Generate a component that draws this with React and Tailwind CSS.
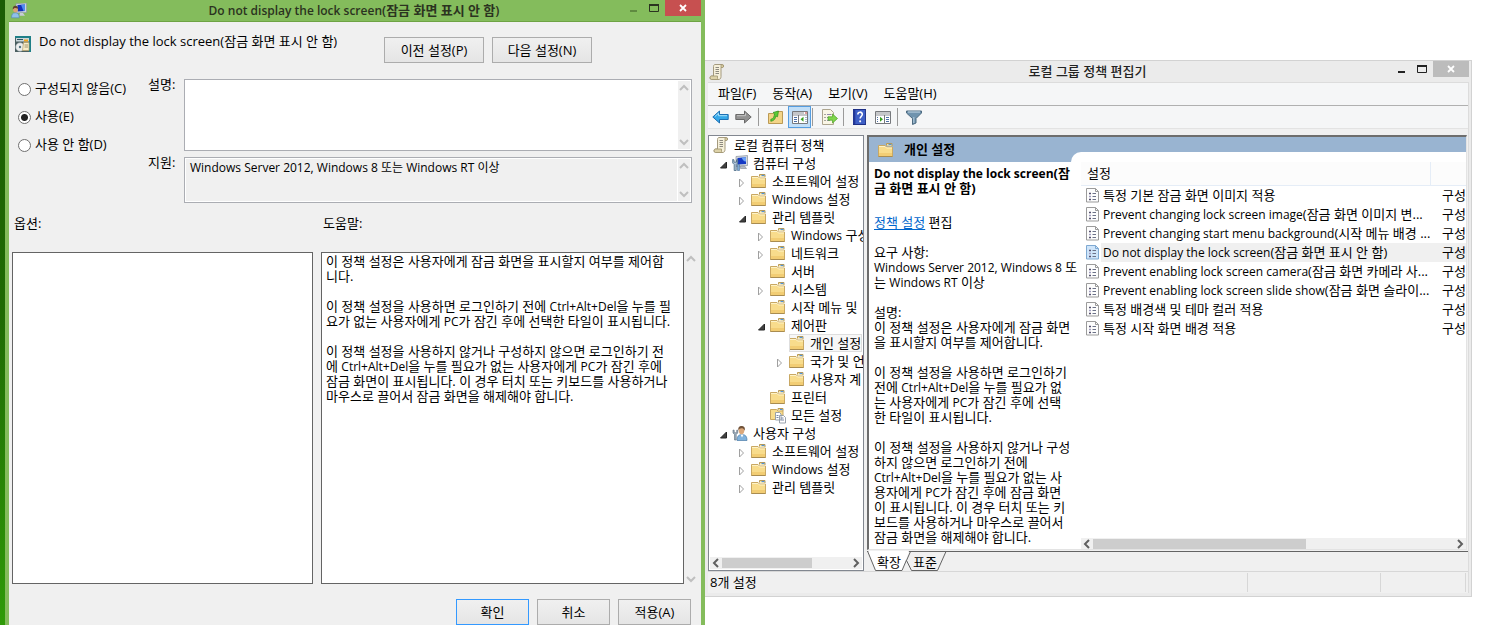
import React from "react";

/* ---------- text ---------- */

// Latin runs are set one pixel smaller than the Hangul around them.
function Mixed({ children }) {
  return children.split(/([A-Za-z][A-Za-z0-9+, ]*[A-Za-z0-9])/).map((part, i) =>
    i % 2 ? (
      <span key={i} className="text-[12px]">
        {part}
      </span>
    ) : (
      part
    )
  );
}

/* ---------- icons ---------- */

const Folder = () => (
  <svg className="size-4 shrink-0" viewBox="0 0 16 16">
    <path d="M8.500 3.500V1.500h5.500V4" fill="#f7e3a0" stroke="#b99a55" />
    <path d="M10.500 2.500h3" stroke="#4f93dd" strokeWidth="1.200" />
    <path d="M.5 14.500V3.500h6.500l1.500 1.500h6v9.500z" fill="#f8dc8c" stroke="#c9a863" />
    <path d="M1 4.500h6L8.500 6H14" fill="none" stroke="#fdf3c8" />
    <path d="M1 11h13v3H1z" fill="#f2cd74" />
    <path d="M.5 14.500h14" stroke="#a98c50" />
  </svg>
);

const Scroll = () => (
  <svg className="size-4 shrink-0" viewBox="0 0 16 16">
    <path d="M4.500 2.500C4.500 1.500 5 .5 6 .5h7.500c1.500 0 1.500 3 0 3H12v9c0 2-1 3-2.500 3H2.500c-2 0-2-3.500 0-3.500h2z" fill="#f6f0da" stroke="#a49a7e" />
    <path d="M12 3.500V1.500c0-1.300 2.500-1 2.500.5s-1 1.500-2.500 1.500zM2.500 12h6v2c0 .8.500 1.500 1 1.500h-7c-1.800 0-1.800-3.500 0-3.500z" fill="#ddd2a8" stroke="#a0946f" strokeWidth=".8" />
    <path d="M6.500 3.500H10M6.500 5.500H10M6.500 7.500H10M6.500 9.500H10" stroke="#8d8a80" />
  </svg>
);

const Computer = () => (
  <svg className="size-4 shrink-0" viewBox="0 0 16 16">
    <path d="M4 1.500l11.500-1v10L4 11.500z" fill="#d3d8df" stroke="#8a919c" strokeWidth=".7" />
    <path d="M5.500 3l8.500-.8v6.800l-8.500.6z" fill="#1639c4" />
    <path d="M9.500 2.600l4.500-.4v4.300c-2 .2-3-1-4.500-3.900z" fill="#6ea3f6" />
    <path d="M8.500 11h4l2 2.500h-6z" fill="#b6bcc5" stroke="#858b95" strokeWidth=".6" />
    <path d="M.7 4.500v3.500l1.500 1.500v6h2V9.500L5.700 8V4.500l-1.200.3v2.400H2V4.800z" fill="#b5c9dc" stroke="#44647f" strokeWidth=".8" />
    <path d="M5.500 9.500h2v6h-2z" fill="#7da9d3" stroke="#4a6e94" strokeWidth=".6" />
  </svg>
);

const Person = () => (
  <svg className="size-4 shrink-0" viewBox="0 0 16 16">
    <path d="M5 15.500c0-4 1.500-6 5-6s5 2 5 6z" fill="#7fb2de" stroke="#4c7ca8" strokeWidth=".7" />
    <path d="M8.500 9.500l1.500 3 1.500-3z" fill="#fff" />
    <ellipse cx="9.500" cy="5.500" rx="2.800" ry="3.700" fill="#dba87b" />
    <path d="M6.300 5.500C6 2 7.500 1 9.500 1s4 1 3.300 4.700c-.9-2-2-2.400-3.300-2.400s-2.700.7-3.200 2.200z" fill="#6f5138" />
    <path d="M1 5v3l1.500 1.500v5.500h1.700V9.500l1.500-1.500v-3l-1 .2v2.500h-2.500V5.200z" fill="#9fb0bf" stroke="#5a6c7c" strokeWidth=".6" />
  </svg>
);

const UserComputer = () => (
  <svg className="size-4 shrink-0" viewBox="0 0 16 16">
    <path d="M5 .7L15.500 0v9.500L5 10z" fill="#ccd4de" stroke="#8791a0" strokeWidth=".6" />
    <path d="M6.500 2l7.500-.6v6.600l-7.500.5z" fill="#1530ba" />
    <path d="M10 1.700l4-.3v6.600l-1.500.1z" fill="#4e8cf0" />
    <path d="M9 10h3l2 2.700H8.500z" fill="#c7cdd6" />
    <path d="M.5 14.800c0-3.300 1-5 3.800-5s3.900 1.700 3.900 5z" fill="#8fc0ea" stroke="#5285b5" strokeWidth=".6" />
    <ellipse cx="4.500" cy="6.500" rx="2.400" ry="3" fill="#dba273" />
    <path d="M1.800 6.500C1.600 3.500 3 2.800 4.500 2.800S7.300 3.700 7 5.800c-2-1.300-4-1.300-5.200.7z" fill="#5f432d" />
  </svg>
);

const PolicyBox = () => (
  <svg className="size-4 shrink-0" viewBox="0 0 16 16">
    <rect width="16" height="16" fill="#4b5f60" />
    <rect width="16" height="2" fill="#1f7f87" />
    <rect x="14" width="2" height="16" fill="#1f7f87" />
    <rect x="1" y="2" width="13" height="3.500" fill="#c9d6da" />
    <path d="M2 3.500h6" stroke="#2d5260" />
    <path d="M9 4.500h4" stroke="#f2a51c" strokeWidth="2" />
    <circle cx="5" cy="11" r="4.300" fill="#eceeee" stroke="#98a5a9" strokeWidth=".6" />
    <circle cx="5" cy="11" r="1.200" fill="#52757f" />
    <path d="M8.500 6.500h5.500v8H7.500z" fill="#f8edc8" stroke="#b5a06c" strokeWidth=".7" />
    <path d="M9.500 9h3.500M9.500 11h3.500" stroke="#8a7e5c" strokeWidth=".8" />
  </svg>
);

const AllSettings = () => (
  <svg className="size-4 shrink-0 overflow-visible" viewBox="0 0 16 16">
    <path d="M8 3V1.500h5V4" fill="#f7e3a0" stroke="#b99a55" />
    <path d="M10 2.500h2.500" stroke="#4f93dd" />
    <path d="M.5 12.500V2.500h6L8 4h5v8.500z" fill="#f8dc8c" stroke="#c9a863" />
    <path d="M5.500 5.500h4l1.500 1.500v6h-5.500zM9.500 8.500h4l2 2v5.500h-6z" fill="#fff" stroke="#8f98a5" strokeWidth=".9" />
    <path d="M6.500 8.500h2M6.500 10.500h2M11 11h2.500M11 13h3" stroke="#6b7a9c" strokeWidth=".9" />
  </svg>
);

const Setting = ({ selected }) => (
  <svg className="h-4 w-[13px] shrink-0" viewBox="0 0 13 16">
    <path d="M.5 1.500h9l3 3v10.500H.5z" fill={selected ? "#cfe5fa" : "#fdfdfd"} stroke={selected ? "#7fa9d2" : "#9b9b9b"} />
    <path d="M9.500 1.500v3h3" fill="none" stroke={selected ? "#7fa9d2" : "#9b9b9b"} />
    <path d="M3 6.500h2M3 12.500h2" stroke="#55506e" strokeWidth="1.500" />
    <path d="M3 9.500h2" stroke="#a09cc0" strokeWidth="1.500" />
    <path d="M6.500 6.500H10M6.500 9.500H10M6.500 12.500H10" stroke="#6c7288" />
  </svg>
);

const Chevron = ({ dir, className = "text-[#606060]" }) => {
  const d = {
    up: "M1 6l4-4 4 4",
    down: "M1 2l4 4 4-4",
    left: "M6 1L2 5l4 4",
    right: "M2 1l4 4-4 4",
  }[dir];
  const tall = dir === "left" || dir === "right";
  return (
    <svg className={`${tall ? "h-[10px] w-2" : "h-2 w-[10px]"} shrink-0 ${className}`} viewBox={tall ? "0 0 8 10" : "0 0 10 8"}>
      <path d={d} fill="none" stroke="currentColor" strokeWidth="2" />
    </svg>
  );
};

const MinIcon = () => (
  <svg className="h-[10px] w-[10px]" viewBox="0 0 10 10">
    <path d="M1 8h7" stroke="currentColor" strokeWidth="2" />
  </svg>
);
const MaxIcon = () => (
  <svg className="h-[10px] w-[10px]" viewBox="0 0 10 10">
    <path d="M.5 1v7.500h9V1" fill="none" stroke="currentColor" />
    <path d="M0 2h10" stroke="currentColor" strokeWidth="2" />
  </svg>
);
const CloseIcon = () => (
  <svg className="h-2 w-2" viewBox="0 0 8 8">
    <path d="M1 1l6 6M7 1L1 7" stroke="#fff" strokeWidth="1.800" />
  </svg>
);

/* ---------- policy dialog ---------- */

const pushButton =
  "h-[26px] border bg-linear-to-b from-[#f0f0f0] to-[#e5e5e5] text-[13px] leading-[18px] whitespace-nowrap text-black";

function Bars({ className = "" }) {
  return (
    <div className={`flex w-3 shrink-0 flex-col items-center justify-between bg-[#f0f0f0] ${className}`}>
      <Chevron dir="up" className="text-[#bfbfbf]" />
      <Chevron dir="down" className="text-[#bfbfbf]" />
    </div>
  );
}

function Field({ id, label, value, className, inner, readOnly }) {
  return (
    <div className={`flex ${className}`}>
      <label htmlFor={id} className="-mt-1 w-9 shrink-0 text-[13px] leading-[18px]">
        {label}
      </label>
      <div className="flex min-w-0 grow border border-[#abadb3] bg-white p-px">
        <textarea
          id={id}
          defaultValue={value}
          readOnly={readOnly}
          className={`block min-w-0 grow resize-none overflow-hidden px-1 text-[12px] leading-[18px] outline-none ${inner}`}
        />
        <Bars className="ml-px py-[3px]" />
      </div>
    </div>
  );
}

const helpLines = [
  "이 정책 설정은 사용자에게 잠금 화면을 표시할지 여부를 제어합",
  "니다.",
  "",
  "이 정책 설정을 사용하면 로그인하기 전에 Ctrl+Alt+Del을 누를 필",
  "요가 없는 사용자에게 PC가 잠긴 후에 선택한 타일이 표시됩니다.",
  "",
  "이 정책 설정을 사용하지 않거나 구성하지 않으면 로그인하기 전",
  "에 Ctrl+Alt+Del을 누를 필요가 없는 사용자에게 PC가 잠긴 후에",
  "잠금 화면이 표시됩니다. 이 경우 터치 또는 키보드를 사용하거나",
  "마우스로 끌어서 잠금 화면을 해제해야 합니다.",
];

function Lines({ lines }) {
  return lines.map((line, i) => (
    <p key={i} className="h-[15px] whitespace-nowrap">
      <Mixed>{line}</Mixed>
    </p>
  ));
}

function Radio({ label, checked }) {
  return (
    <label className="flex h-[18px] items-center gap-1 whitespace-nowrap">
      <input
        type="radio"
        name="state"
        defaultChecked={checked}
        className="size-[13px] appearance-none rounded-full border border-[#707070] bg-white checked:bg-[radial-gradient(circle,#222_3px,#fff_4px)]"
      />
      {label}
    </label>
  );
}

function PolicyDialog() {
  return (
    <section className="flex min-h-screen min-w-0 bg-linear-to-b from-[#1c5c04] via-[#1f6a04] to-[#2f9a08] pl-[5px]">
      <div className="flex min-w-0 grow flex-col bg-[#84bc5c] pr-1 pl-1">
        <header className="flex h-[21px] items-start text-[#2b3320]">
          <div className="ml-[2px] flex h-[21px] w-[68px] items-center">
            <UserComputer />
          </div>
          <h1 className="grow text-center text-[13px] leading-[20px] font-semibold whitespace-nowrap">
            <Mixed>Do not display the lock screen(잠금 화면 표시 안 함)</Mixed>
          </h1>
          <button aria-label="최소화" className="mt-[3px] mr-[10px] text-[#5f8a40]">
            <MinIcon />
          </button>
          <button aria-label="최대화" className="mt-[3px] mr-[6px]">
            <MaxIcon />
          </button>
          <button aria-label="닫기" className="flex h-4 w-9 items-center justify-center bg-[#c75050]">
            <CloseIcon />
          </button>
        </header>

        <div className="flex grow flex-col border-t border-[#6ea344] bg-[#f0f0f0] text-[13px]">
          <div className="flex px-[6px] pt-[14px]">
            <div className="flex h-4 w-[369px] gap-2 whitespace-nowrap">
              <PolicyBox />
              <h2 className="-mt-1 leading-[18px]">Do not display the lock screen(잠금 화면 표시 안 함)</h2>
            </div>
            <div className="mt-px flex gap-2">
              <button className={`${pushButton} w-[100px] border-[#acacac]`}>이전 설정(P)</button>
              <button className={`${pushButton} w-[100px] border-[#acacac]`}>다음 설정(N)</button>
            </div>
          </div>

          <div className="flex pt-4 pr-[9px] pl-[9px]">
            <fieldset className="flex w-[130px] shrink-0 flex-col gap-[10px] pt-px">
              <Radio label="구성되지 않음(C)" />
              <Radio label="사용(E)" checked />
              <Radio label="사용 안 함(D)" />
            </fieldset>
            <div className="flex min-w-0 grow flex-col gap-[6px]">
              <Field id="comment" label="설명:" value="" className="h-[72px]" inner="bg-white" />
              <Field
                id="supported"
                label="지원:"
                value="Windows Server 2012, Windows 8 또는 Windows RT 이상"
                className="h-[46px]"
                inner="bg-[#f0f0f0]"
                readOnly
              />
            </div>
          </div>

          <div className="flex grow pt-[11px] pr-1 pl-[3px]">
            <div className="flex w-[301px] shrink-0 flex-col">
              <h3 className="h-[38px] pl-[2px] leading-[18px]">옵션:</h3>
              <div className="grow border border-[#646464] bg-white" />
            </div>
            <div className="ml-2 flex min-w-0 grow flex-col">
              <h3 className="h-[38px] pl-[2px] leading-[18px]">도움말:</h3>
              <div className="flex grow">
                <div className="min-w-0 grow overflow-hidden border border-[#646464] bg-white pt-px pl-1 leading-[15px]">
                  <Lines lines={helpLines} />
                </div>
                <Bars className="ml-px pt-[3px] pb-px" />
              </div>
            </div>
          </div>

          <footer className="flex justify-end gap-2 pt-[15px] pr-[10px]">
            <button className={`${pushButton} w-[73px] border-[#3399ff]`}>확인</button>
            <button className={`${pushButton} w-[73px] border-[#acacac]`}>취소</button>
            <button className={`${pushButton} w-[73px] border-[#acacac]`}>적용(A)</button>
          </footer>
        </div>
      </div>
    </section>
  );
}

/* ---------- group policy editor ---------- */

const tree = [
  { level: 0, icon: Scroll, label: "로컬 컴퓨터 정책" },
  { level: 1, icon: Computer, label: "컴퓨터 구성", open: true },
  { level: 2, icon: Folder, label: "소프트웨어 설정", open: false },
  { level: 2, icon: Folder, label: "Windows 설정", open: false },
  { level: 2, icon: Folder, label: "관리 템플릿", open: true },
  { level: 3, icon: Folder, label: "Windows 구성", open: false },
  { level: 3, icon: Folder, label: "네트워크", open: false },
  { level: 3, icon: Folder, label: "서버" },
  { level: 3, icon: Folder, label: "시스템", open: false },
  { level: 3, icon: Folder, label: "시작 메뉴 및" },
  { level: 3, icon: Folder, label: "제어판", open: true },
  { level: 4, icon: Folder, label: "개인 설정", selected: true },
  { level: 4, icon: Folder, label: "국가 및 언", open: false },
  { level: 4, icon: Folder, label: "사용자 계" },
  { level: 3, icon: Folder, label: "프린터" },
  { level: 3, icon: AllSettings, label: "모든 설정" },
  { level: 1, icon: Person, label: "사용자 구성", open: true },
  { level: 2, icon: Folder, label: "소프트웨어 설정", open: false },
  { level: 2, icon: Folder, label: "Windows 설정", open: false },
  { level: 2, icon: Folder, label: "관리 템플릿", open: false },
];

const indent = ["pl-[3px]", "pl-[9px]", "pl-7", "pl-[47px]", "pl-[66px]"];

function Twisty({ open }) {
  return (
    <svg className="mt-[3px] mr-1 h-[10px] w-[9px] shrink-0" viewBox="0 0 9 10">
      {open === true && <path d="M7.500 2v6h-6z" fill="#404040" stroke="#262626" />}
      {open === false && <path d="M1.500 1v8L5.500 5z" fill="#fff" stroke="#a0a0a0" />}
    </svg>
  );
}

function Tree() {
  return (
    <nav className="flex w-[156px] shrink-0 flex-col overflow-hidden border border-[#828790] bg-white px-px pb-px">
      <ul className="grow">
        {tree.map(({ level, icon: Icon, label, open, selected }, i) => (
          <li key={i} className={`flex h-[18px] items-center ${indent[level]}`}>
            {level > 0 && <Twisty open={open} />}
            <span
              className={`flex h-[18px] items-center gap-1 whitespace-nowrap ${
                selected ? "grow bg-[#f7f7f7] outline -outline-offset-1 outline-[#dedede]" : ""
              }`}
            >
              <Icon />
              <span className="pl-px leading-[18px]">
                <Mixed>{label}</Mixed>
              </span>
            </span>
          </li>
        ))}
      </ul>
      <div className="flex h-3 shrink-0 items-center bg-[#f0f0f0] px-[2px]">
        <Chevron dir="left" />
        <div className="flex h-[10px] grow px-[2px]">
          <div className="w-[70%] bg-[#cdcdcd]" />
        </div>
        <Chevron dir="right" />
      </div>
    </nav>
  );
}

const rows = [
  "특정 기본 잠금 화면 이미지 적용",
  "Prevent changing lock screen image(잠금 화면 이미지 변...",
  "Prevent changing start menu background(시작 메뉴 배경 ...",
  "Do not display the lock screen(잠금 화면 표시 안 함)",
  "Prevent enabling lock screen camera(잠금 화면 카메라 사...",
  "Prevent enabling lock screen slide show(잠금 화면 슬라이...",
  "특정 배경색 및 테마 컬러 적용",
  "특정 시작 화면 배경 적용",
];

const description = [
  "요구 사항:",
  "Windows Server 2012, Windows 8 또",
  "는 Windows RT 이상",
  "",
  "설명:",
  "이 정책 설정은 사용자에게 잠금 화면",
  "을 표시할지 여부를 제어합니다.",
  "",
  "이 정책 설정을 사용하면 로그인하기",
  "전에 Ctrl+Alt+Del을 누를 필요가 없",
  "는 사용자에게 PC가 잠긴 후에 선택",
  "한 타일이 표시됩니다.",
  "",
  "이 정책 설정을 사용하지 않거나 구성",
  "하지 않으면 로그인하기 전에",
  "Ctrl+Alt+Del을 누를 필요가 없는 사",
  "용자에게 PC가 잠긴 후에 잠금 화면",
  "이 표시됩니다. 이 경우 터치 또는 키",
  "보드를 사용하거나 마우스로 끌어서",
  "잠금 화면을 해제해야 합니다.",
];

const Separator = () => <div className="h-[18px] w-px bg-[#9a9a9a]" />;

function Toolbar() {
  const button = "flex h-[22px] w-[23px] items-center justify-center";
  return (
    <div className="flex h-[22px] items-center bg-[#f5f6f7] pl-px">
      <button aria-label="뒤로" className={button}>
        <svg className="h-4 w-[17px]" viewBox="0 0 17 16">
          <path d="M.8 8l6.700-6v3.500h8.700v5H7.500V14z" fill="#35a8e8" stroke="#1d6fb3" />
          <path d="M3 7.500l3.500-3.200v2.400h8.500" fill="none" stroke="#a7e0fa" />
        </svg>
      </button>
      <button aria-label="앞으로" className={button}>
        <svg className="h-4 w-[17px]" viewBox="0 0 17 16">
          <path d="M16.200 8L9.500 2v3.500H.8v5h8.700V14z" fill="#929292" stroke="#696969" />
          <path d="M2 6.700h8.500V4.300" fill="none" stroke="#c4c4c4" />
        </svg>
      </button>
      <div className="mr-[9px] ml-[3px]">
        <Separator />
      </div>
      <button aria-label="위로" className="mr-1 flex h-[22px] w-4 items-center justify-center">
        <svg className="size-4" viewBox="0 0 16 16">
          <path d="M.5 14.500v-10h5l1.500 1.500h2V2.500h5.500v12z" fill="#f3d488" stroke="#bb9a55" />
          <path d="M2.800 12.300c3.500-.5 4.700-2.800 5-5.300l1.700.8L10.500 2 5 3.500l1.500 1.200c-.3 3-1 5-3.700 5.600z" fill="#5ccb35" stroke="#2f8f1c" strokeWidth=".7" />
        </svg>
      </button>
      <button aria-label="콘솔 트리 표시" className="flex h-[22px] w-[23px] items-center justify-center border border-[#559de0] bg-[#c2dff8]">
        <svg className="h-[13px] w-4" viewBox="0 0 16 13">
          <path d="M.5.5h15v12H.5z" fill="#fff" stroke="#77797d" />
          <path d="M1 2h11M1 4h14" stroke="#8b8e94" />
          <path d="M13 2h2" stroke="#c23b3b" />
          <path d="M6.500 4v9" stroke="#77797d" />
          <path d="M2 6.500h3M2 8.500h3M2 10.500h3M13.500 6.500h1M13.500 8.500h1M13.500 10.500h1" stroke="#4d6fa5" />
          <path d="M11.500 5.800v5l-3-2.500z" fill="#38a020" />
        </svg>
      </button>
      <div className="mr-2 ml-px">
        <Separator />
      </div>
      <button aria-label="목록 내보내기" className="flex h-[22px] w-[17px] items-center justify-center">
        <svg className="h-4 w-[17px]" viewBox="0 0 17 16">
          <path d="M1.500.5h8l3 3v12h-11z" fill="#faf6e6" stroke="#ada58e" />
          <path d="M3.500 5.500h1M3.500 8.500h1M3.500 11.500h1" stroke="#555" />
          <path d="M6 5.500h4.500M6 8.500h3M6 11.500h3" stroke="#9088a8" />
          <path d="M7 7.800h4.500V5l5 4.500-5 4.500v-2.800H7z" fill="#7fd64c" stroke="#4ba022" strokeWidth=".7" />
        </svg>
      </button>
      <div className="mr-[9px] ml-[5px]">
        <Separator />
      </div>
      <button aria-label="도움말" className="flex h-[22px] w-[13px] items-center justify-center">
        <svg className="h-4 w-[13px]" viewBox="0 0 14 16" preserveAspectRatio="none">
          <rect x=".5" y=".5" width="13" height="15" fill="#3e5fc6" stroke="#1d2f86" />
          <path d="M1.500 1v14" stroke="#23389a" strokeWidth="2" />
          <path d="M5.200 5.500C5.200 2.500 10 2.500 10 5.300c0 2-2.300 2-2.300 4.200" fill="none" stroke="#fff" strokeWidth="1.700" />
          <circle cx="7.700" cy="12.300" r="1.100" fill="#fff" />
        </svg>
      </button>
      <button aria-label="작업 창 표시" className="ml-[9px] flex h-[22px] w-4 items-center justify-center">
        <svg className="h-[13px] w-4" viewBox="0 0 16 13">
          <path d="M.5.5h15v12H.5z" fill="#fff" stroke="#77797d" />
          <path d="M1 2h14M1 4h14" stroke="#8b8e94" />
          <path d="M9.500 4v9" stroke="#77797d" />
          <path d="M2 6.500h1M2 8.500h1M2 10.500h1M11 6.500h3M11 8.500h3M11 10.500h3" stroke="#4d6fa5" />
          <path d="M5 5.800v5l3-2.500z" fill="#38a020" />
        </svg>
      </button>
      <div className="mr-2 ml-[6px]">
        <Separator />
      </div>
      <button aria-label="필터" className="flex h-[22px] w-4 items-center justify-center">
        <svg className="h-[15px] w-4" viewBox="0 0 16 15">
          <path d="M.5 1h15v2L10 8.500v4.500l-3.500 1.500v-6L.5 3z" fill="#6f93ae" stroke="#4d6a80" />
          <path d="M2 2h12" stroke="#c7dae7" />
          <path d="M7.800 7v6" stroke="#b5cddd" />
        </svg>
      </button>
    </div>
  );
}

function SettingsTable() {
  return (
    <table className="w-full table-fixed border-collapse text-left">
      <thead>
        <tr className="h-[23px] border-b border-[#e5edf7] bg-[#fcfcfc]">
          <th className="border-r border-[#e5edf7] py-0 pl-[6px] font-normal">설정</th>
          <th className="w-9 p-0" aria-label="상태" />
        </tr>
      </thead>
      <tbody>
        {rows.map((label, i) => (
          <tr key={label} className="h-[19px]">
            <td className="overflow-hidden p-0 pl-[5px] leading-[19px] whitespace-nowrap">
              <div className="flex items-center gap-[2px]">
                <Setting selected={i === 3} />
                <span className={`grow pl-[2px] ${i === 3 ? "bg-[#f0f0f0]" : ""}`}>
                  <Mixed>{label}</Mixed>
                </span>
              </div>
            </td>
            <td className={`overflow-hidden p-0 pl-3 leading-[19px] whitespace-nowrap ${i === 3 ? "bg-[#f0f0f0]" : ""}`}>구성</td>
          </tr>
        ))}
      </tbody>
    </table>
  );
}

function Details() {
  return (
    <div className="ml-[3px] flex min-w-0 grow flex-col">
      <div className="mr-px flex border-t-2 border-r border-b border-l-2 border-t-[#6d6d6d] border-r-[#e3e3e3] border-b-[#e3e3e3] border-l-[#6d6d6d] bg-[#99b4d1]">
        <div className="z-10 flex w-[202px] shrink-0 flex-col">
          <div className="flex h-[25px] items-center gap-[10px] pl-[9px]">
            <Folder />
            <h2 className="font-bold">개인 설정</h2>
          </div>
          <div className="grow bg-white pt-1 pb-1 pl-[5px] leading-[15px]">
            <h3 className="h-[33px] font-bold whitespace-nowrap">
              <Mixed>Do not display the lock screen(잠</Mixed>
              <br />
              금 화면 표시 안 함)
            </h3>
            <p className="mt-4 mb-[15px]">
              <a href="#edit" className="text-[#0066cc] underline underline-offset-2">
                정책 설정
              </a>{" "}
              편집
            </p>
            <Lines lines={description} />
          </div>
        </div>
        <div className="flex min-w-0 grow flex-col pt-[15px]">
          <div className="flex grow flex-col rounded-tl-[10px] bg-white pt-[10px] pl-[10px]">
            <div className="grow">
              <SettingsTable />
            </div>
            <div className="flex h-[11px] items-center bg-[#f0f0f0] px-[2px]">
              <Chevron dir="left" />
              <div className="flex h-[10px] grow px-[2px]">
                <div className="w-[59%] bg-[#cdcdcd]" />
              </div>
              <Chevron dir="right" />
            </div>
          </div>
        </div>
      </div>
      <div className="relative mt-px flex h-5 border-t border-[#646464]">
        <svg className="absolute -top-px left-0 h-5 w-[82px]" viewBox="0 0 82 20">
          <path d="M1 0l8 19h26l4-10 3-9z" fill="#fff" />
          <path d="M.5 0l8 19.500h26.500L39.500 9M43.500.5H79L70.500 19.500H44.500L39.500 9.500L43.500.5" fill="none" stroke="#646464" />
        </svg>
        <button className="relative ml-[10px] text-[13px] leading-[18px]">확장</button>
        <button className="relative ml-3 text-[13px] leading-[18px]">표준</button>
      </div>
    </div>
  );
}

function PolicyEditor() {
  return (
    <section className="mt-[60px] min-w-0 self-start border border-l-0 border-[#d2d2d2] bg-[#ebebeb] pr-[2px] pb-[3px] pl-[3px] text-[13px]">
      <header className="flex h-[21px] items-start text-[#222]">
        <div className="mt-[3px] w-[70px] pl-px">
          <Scroll />
        </div>
        <h1 className="grow text-center leading-[20px] font-medium">로컬 그룹 정책 편집기</h1>
        <button aria-label="최소화" className="mt-[3px] mr-[10px]">
          <MinIcon />
        </button>
        <button aria-label="최대화" className="mt-[3px] mr-[6px]">
          <MaxIcon />
        </button>
        <button aria-label="닫기" className="flex h-4 w-9 items-center justify-center bg-[#bcbcbc]">
          <CloseIcon />
        </button>
      </header>
      <div className="border-t border-r border-[#dcdcdc] bg-[#f0f0f0]">
        <div className="flex h-[23px] items-center gap-4 border-b border-[#b0b0b0] bg-[#f5f6f7] pl-[10px] whitespace-nowrap">
          <button>파일(F)</button>
          <button>동작(A)</button>
          <button>보기(V)</button>
          <button>도움말(H)</button>
        </div>
        <Toolbar />
        <div className="flex border-t border-[#e3e3e3] pt-[6px]">
          <Tree />
          <Details />
        </div>
        <footer className="flex h-[22px] border-t border-[#d7d7d7] pt-px pb-px leading-[18px]">
          <span className="grow pl-[2px]">8개 설정</span>
          <span className="w-[133px] border-l border-[#d7d7d7]" />
          <span className="mr-[2px] w-[86px] border-x border-[#d7d7d7]" />
        </footer>
      </div>
    </section>
  );
}

export default function App() {
  return (
    <main className="grid min-h-screen grid-cols-[705fr_767fr_19fr] bg-white font-['Open_Sans','Noto_Sans_CJK_KR',sans-serif] text-black">
      <PolicyDialog />
      <PolicyEditor />
    </main>
  );
}
